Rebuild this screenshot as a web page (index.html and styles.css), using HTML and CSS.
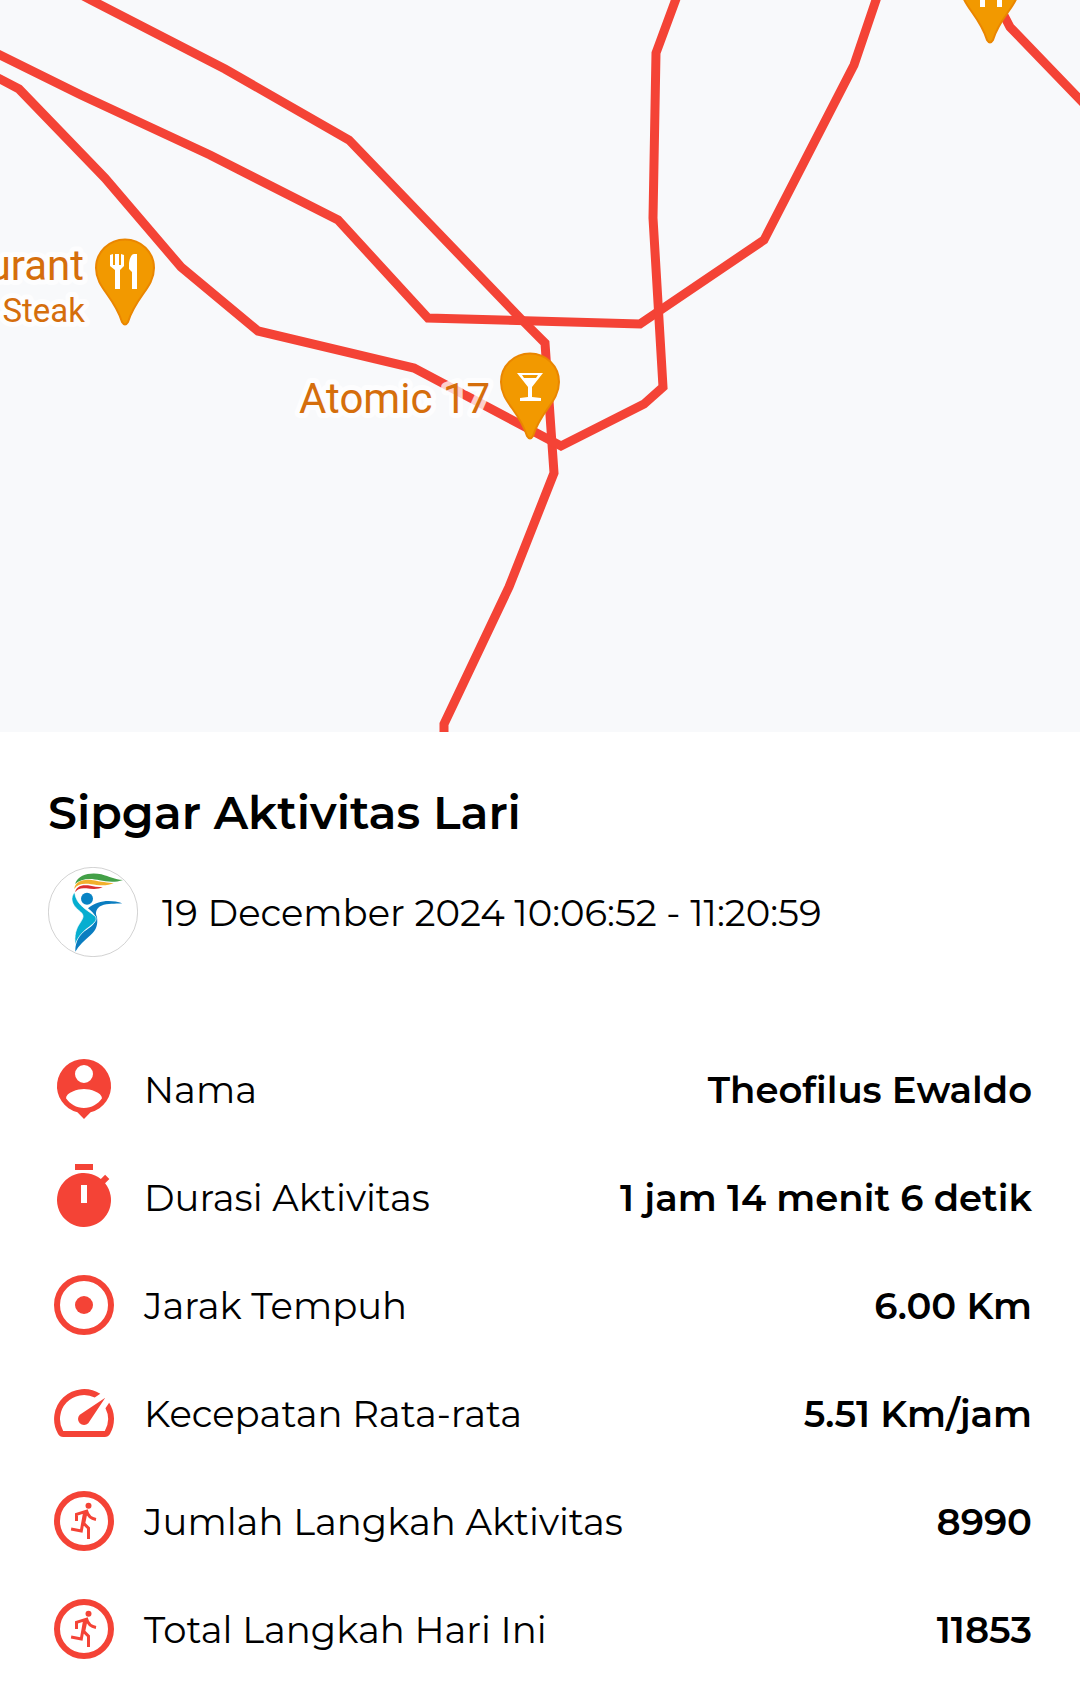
FILE: index.html
```html
<!DOCTYPE html>
<html lang="id">
<head>
  <meta charset="UTF-8" />
  <meta name="viewport" content="width=device-width, initial-scale=1.0" />
  <title>Sipgar Aktivitas Lari</title>
  <link rel="stylesheet" href="styles.css">
</head>
<body>
  <svg class="map" viewBox="0 0 1080 732">
    <defs>
      <g id="pin">
        <path class="pin-shape" d="M0 1.5C-16 1.5-29 14-29 30C-29 50-11 58-3 84Q0 89 3 84C11 58 29 50 29 30C29 14 16 1.5 0 1.5z" />
      </g>
      <g id="fork-knife" fill="#fff">
        <path d="M-15 17l3-1v11h2V16h4v11h2V16l3 1v11l-4 4v19h-5V32l-5-4z" />
        <path d="M12 16v35H7V34l-3-3v-4c0-5 2-11 5-11z" />
      </g>
    </defs>

    <!-- route -->
    <g class="route">
      <polyline points="72,-10 91,0 225,69 349,140 523,321 545,343 554,473 509,587 444,724 444,740" />
      <polyline points="-10,50 0,55 81,95 210,155 338,220 428,318 640,324 764,240 854,65 876,0 880,-12" />
      <polyline points="-10,74 0,79 19,89 105,178 181,267 258,331 414,368 561,446 644,404 663,387 653,218 656,53 680,-12" />
      <polyline points="996,0 1010,27 1090,110" />
    </g>

    <!-- places -->
    <use href="#pin" x="125" y="238" />
    <use href="#fork-knife" x="125" y="238" />
    <use href="#pin" x="990" y="-44" />
    <use href="#fork-knife" x="990" y="-44" />
    <use href="#pin" x="530" y="352" />
    <path fill="#fff" fill-rule="evenodd" d="M517 373h26l-11 14v10l9 1v3h-21v-3l8-1v-10zM522 375l2 3h12l2-3z" />

    <text class="place" x="84" y="280" text-anchor="end">urant</text>
    <text class="place place-sub" x="85" y="322" text-anchor="end">Steak</text>
    <text class="place" x="490" y="413" text-anchor="end">Atomic 17</text>
  </svg>

  <div class="activity">
    <h1>Sipgar Aktivitas Lari</h1>
    <div class="date">
      <svg class="avatar" viewBox="0 0 270 270">
        <circle cx="135" cy="135" r="134" fill="#fff" stroke="#bbb" stroke-width="2" />
        <path fill="#43a047" d="M81 51C92 20 130 16 160 22C185 29 200 38 225 39C200 48 175 44 155 40C130 33 100 33 81 51z" />
        <path fill="#f2b02c" d="M79 66C80 45 105 36 130 39C160 44 180 48 197 48C180 58 150 55 130 52C105 48 88 52 79 66z" />
        <path fill="#dc2f2f" d="M82 76C82 60 100 52 120 55C135 58 150 61 164 61C150 68 130 66 115 64C98 62 88 66 82 76z" />
        <circle cx="117" cy="95" r="18" fill="#0883c4" />
        <path fill="#0a7dc0" d="M223 109C190 98 150 98 120 124C130 132 138 140 143 150C147 165 130 180 110 192C90 206 82 225 82 254C92 236 110 220 128 204C146 188 150 172 147 150C140 136 146 122 160 116C180 109 200 111 223 109z" />
        <path fill="#06aed0" stroke="#fff" stroke-width="2" d="M80 76C66 92 70 112 92 130C110 144 108 150 96 168C84 185 78 205 82 235C86 215 100 198 118 184C140 168 148 160 143 149C120 130 84 115 80 76z" />
      </svg>
      <span>19 December 2024 10:06:52 - 11:20:59</span>
    </div>

    <dl class="stats">
      <div class="row">
        <dt>
          <svg class="icon" viewBox="0 0 24 24"><path fill-rule="evenodd" d="M12 2a9 9 0 0 0-2.2 17.73L12 22l2.2-2.27A9 9 0 0 0 12 2zM12 4a3 3 0 1 1 0 6 3 3 0 0 1 0-6zM12 18.3c-2.5 0-4.71-1.28-6-3.22.03-1.99 4-3.08 6-3.08s5.97 1.09 6 3.08c-1.29 1.94-3.5 3.22-6 3.22z" /></svg>
          Nama
        </dt>
        <dd>Theofilus Ewaldo</dd>
      </div>
      <div class="row">
        <dt>
          <svg class="icon" viewBox="0 0 24 24"><path fill-rule="evenodd" d="M9 1h6v2H9zM19.03 7.39l1.42-1.42-1.41-1.41-1.42 1.42A9 9 0 1 0 19.03 7.39zM13 14h-2V8h2z" /></svg>
          Durasi Aktivitas
        </dt>
        <dd>1 jam 14 menit 6 detik</dd>
      </div>
      <div class="row">
        <dt>
          <svg class="icon" viewBox="0 0 24 24"><circle class="ring" cx="12" cy="12" r="9" /><circle cx="12" cy="12" r="3" /></svg>
          Jarak Tempuh
        </dt>
        <dd>6.00 Km</dd>
      </div>
      <div class="row">
        <dt>
          <svg class="icon" viewBox="0 0 24 24"><path d="M20.38 8.57l-1.23 1.85a8 8 0 0 1-.22 7.58H5.07A8 8 0 0 1 15.58 6.85l1.85-1.23A10 10 0 0 0 3.35 19a2 2 0 0 0 1.72 1h13.85a2 2 0 0 0 1.74-1 10 10 0 0 0-.27-10.44zM10.59 15.41a2 2 0 0 0 2.83 0l5.66-8.49-8.49 5.66a2 2 0 0 0 0 2.83z" /></svg>
          Kecepatan Rata-rata
        </dt>
        <dd>5.51 Km/jam</dd>
      </div>
      <div class="row">
        <dt>
          <svg class="icon" viewBox="0 0 24 24"><circle class="ring" cx="12" cy="12" r="9" /><circle cx="13.5" cy="6.9" r="1" /><path class="runner" d="M9.5 12v-2.2l3.4-1.1c.4 1.6 1.500 2.5 3.1 2.8M7.7 14.700l3.4.6 1.1-6.2M12.7 9l-.8 3.8 1.6 1.6V18" /></svg>
          Jumlah Langkah Aktivitas
        </dt>
        <dd>8990</dd>
      </div>
      <div class="row">
        <dt>
          <svg class="icon" viewBox="0 0 24 24"><circle class="ring" cx="12" cy="12" r="9" /><circle cx="13.5" cy="6.9" r="1" /><path class="runner" d="M9.5 12v-2.2l3.4-1.1c.4 1.6 1.5 2.5 3.1 2.8M7.7 14.7l3.4.6 1.1-6.2M12.7 9l-.8 3.8 1.6 1.6V18" /></svg>
          Total Langkah Hari Ini
        </dt>
        <dd>11853</dd>
      </div>
    </dl>
  </div>
</body>
</html>
```
FILE: styles.css
```css
body {
  margin: 0;
  background-color: #fff;
  font-family: Montserrat, Inter, sans-serif;
  color: #000;
}

.map {
  display: block;
  width: 100%;
  background-color: #f8f9fb;
}

.route {
  fill: none;
  stroke: #f44336;
  stroke-width: 9px;
}

.pin-shape {
  fill: #f29900;
  stroke: #ea8600;
  stroke-width: 2px;
}

.place {
  font-family: Roboto, sans-serif;
  font-size: 42px;
  fill: #d56e0c;
  stroke: rgba(255, 255, 255, 0.75);
  stroke-width: 10px;
  stroke-linejoin: round;
  paint-order: stroke;
}

.place-sub {
  font-size: 33px;
}

.activity {
  padding: 48px 48px 24px;
}

h1 {
  margin: 0;
  font-size: 46px;
  line-height: 66px;
  font-weight: 600;
}

.date {
  display: flex;
  align-items: center;
  gap: 24px;
  margin-top: 21px;
  font-size: 37px;
  font-weight: 400;
}

.avatar {
  width: 90px;
  height: 90px;
}

.stats {
  display: flex;
  flex-direction: column;
  gap: 36px;
  margin: 96px 0 0;
  font-size: 37px;
}

.row {
  display: flex;
  justify-content: space-between;
  align-items: center;
}

dt {
  display: flex;
  align-items: center;
  gap: 24px;
  font-weight: 400;
}

dd {
  margin: 0;
  font-weight: 600;
}

.icon {
  width: 72px;
  height: 72px;
  fill: #f44336;
}

.ring,
.runner {
  fill: none;
  stroke: #f44336;
  stroke-width: 2px;
}

.runner {
  stroke-width: 1px;
}
```
